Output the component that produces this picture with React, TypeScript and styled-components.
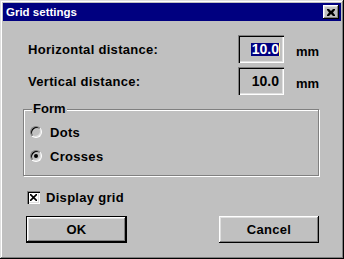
import React from 'react';
import styled, { createGlobalStyle } from 'styled-components';

const GlobalStyle = createGlobalStyle`
  html, body {
    margin: 0;
    padding: 0;
    background: #c0c0c0;
  }
  * {
    box-sizing: border-box;
  }
`;

const Window = styled.div`
  width: 344px;
  height: 259px;
  padding: 3px;
  background: #c0c0c0;
  box-shadow: inset -1px -1px #000, inset 1px 1px #dfdfdf,
    inset -2px -2px #808080, inset 2px 2px #fff;
  font-family: 'Liberation Sans', Arial, sans-serif;
  font-weight: bold;
  color: #000;
  display: flex;
  flex-direction: column;
`;

const TitleBar = styled.div`
  height: 18px;
  background: #000080;
  display: flex;
  align-items: center;
  padding: 0 2px 0 3px;
`;

const Title = styled.span`
  flex: 1;
  color: #fff;
  font-size: 11.5px;
`;

const CloseButton = styled.button`
  width: 16px;
  height: 14px;
  padding: 0;
  border: none;
  background: #c0c0c0;
  box-shadow: inset -1px -1px #000, inset 1px 1px #fff,
    inset -2px -2px #808080, inset 2px 2px #dfdfdf;
  display: flex;
  align-items: center;
  justify-content: center;
`;

const Body = styled.div`
  flex: 1;
  padding: 14px 22px 0 20px;
  display: flex;
  flex-direction: column;
`;

const FieldRow = styled.div`
  display: grid;
  grid-template-columns: 198px 46px 1fr;
  column-gap: 12px;
  align-items: center;
  padding-left: 5px;
  height: 28px;
  margin-bottom: 4px;
  font-size: 13px;
`;

const Label = styled.span`
  letter-spacing: 0.3px;
`;

const Unit = styled.span`
  padding-top: 4px;
`;

const EditBox = styled.div`
  height: 28px;
  background: #c0c0c0;
  box-shadow: inset 1px 1px #808080, inset 2px 2px #000,
    inset -1px -1px #fff, inset -2px -2px #dfdfdf;
  display: flex;
  align-items: center;
  justify-content: flex-end;
  padding-right: 4px;
  font-size: 14px;
`;

const Selected = styled.span<{ $active?: boolean }>`
  background: ${(p) => (p.$active ? '#000080' : 'transparent')};
  color: ${(p) => (p.$active ? '#fff' : '#000')};
  line-height: 13px;
  padding: 0 0 0 1px;
  border-right: 1px solid ${(p) => (p.$active ? '#ffff80' : 'transparent')};
`;

const Group = styled.fieldset`
  margin: 3px 0 0 0;
  padding: 6px 0 0 6px;
  height: 74px;
  border: 1px solid #808080;
  box-shadow: inset 1px 1px #fff, 1px 1px #fff;
  display: flex;
  flex-direction: column;
  gap: 4px;
`;

const Legend = styled.legend`
  font-size: 13px;
  padding: 0 1px;
  margin-left: 2px;
  background: #c0c0c0;
  line-height: 14px;
`;

const Option = styled.label`
  display: flex;
  align-items: center;
  gap: 8px;
  height: 20px;
  font-size: 13px;
  letter-spacing: 0.3px;
`;

const Radio = styled.span<{ $checked?: boolean }>`
  width: 12px;
  height: 12px;
  border-radius: 50%;
  border: 1px solid;
  border-color: #808080 #fff #fff #808080;
  box-shadow: inset 1px 1px #000, inset -1px -1px #dfdfdf;
  background: #c0c0c0;
  display: flex;
  align-items: center;
  justify-content: center;
  &::after {
    content: '';
    width: 4px;
    height: 4px;
    border-radius: 50%;
    background: ${(p) => (p.$checked ? '#000' : 'transparent')};
  }
`;

const CheckRow = styled.label`
  display: flex;
  align-items: center;
  gap: 6px;
  margin: 14px 0 0 4px;
  font-size: 13px;
  letter-spacing: 0.3px;
`;

const CheckBox = styled.span`
  width: 13px;
  height: 13px;
  background: #fff;
  box-shadow: inset 1px 1px #808080, inset 2px 2px #000,
    inset -1px -1px #fff, inset -2px -2px #dfdfdf;
  display: flex;
  align-items: center;
  justify-content: center;
`;

const ButtonRow = styled.div`
  display: flex;
  justify-content: space-between;
  padding-left: 3px;
  margin-top: 11px;
`;

const Button = styled.button<{ $default?: boolean }>`
  width: ${(p) => (p.$default ? '101px' : '100px')};
  height: 27px;
  padding: 0;
  border: ${(p) => (p.$default ? '1px solid #000' : 'none')};
  background: #c0c0c0;
  box-shadow: inset -1px -1px #000, inset 1px 1px #fff,
    inset -2px -2px #808080, inset 2px 2px #dfdfdf;
  font-family: 'Liberation Sans', Arial, sans-serif;
  font-weight: bold;
  font-size: 13px;
  letter-spacing: 0.3px;
  color: #000;
`;

export default function App() {
  return (
    <>
      <GlobalStyle />
      <Window>
        <TitleBar>
          <Title>Grid settings</Title>
          <CloseButton aria-label="Close">
            <svg width="8" height="7" viewBox="0 0 8 7">
              <path d="M0 0h2l2 2 2-2h2v1L6 3.5 8 6v1H6L4 5 2 7H0V6l2-2.5L0 1z" fill="#000" />
            </svg>
          </CloseButton>
        </TitleBar>
        <Body>
          <FieldRow>
            <Label>Horizontal distance:</Label>
            <EditBox>
              <Selected $active>10.0</Selected>
            </EditBox>
            <Unit>mm</Unit>
          </FieldRow>
          <FieldRow>
            <Label>Vertical distance:</Label>
            <EditBox>
              <Selected>10.0</Selected>
            </EditBox>
            <Unit>mm</Unit>
          </FieldRow>
          <Group>
            <Legend>Form</Legend>
            <Option>
              <Radio />
              Dots
            </Option>
            <Option>
              <Radio $checked />
              Crosses
            </Option>
          </Group>
          <CheckRow>
            <CheckBox>
              <svg width="7" height="7" viewBox="0 0 7 7">
                <path d="M0 0L7 7M7 0L0 7" stroke="#000" strokeWidth="1.6" />
              </svg>
            </CheckBox>
            Display grid
          </CheckRow>
          <ButtonRow>
            <Button $default>OK</Button>
            <Button>Cancel</Button>
          </ButtonRow>
        </Body>
      </Window>
    </>
  );
}
